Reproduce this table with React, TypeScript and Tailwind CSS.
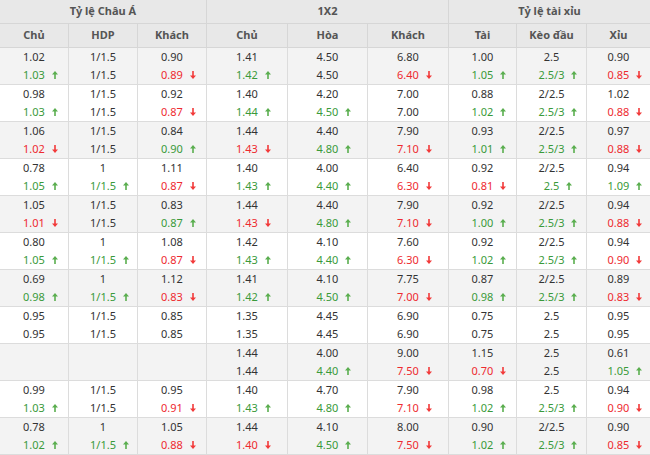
import React from "react";

const COLS = "grid grid-cols-[69px_69px_69px_81px_80px_81px_68px_70px_63px]";

const rows: string[][][] = [
  [["1.02", "1.03u"], ["1/1.5", "1/1.5"], ["0.90", "0.89d"], ["1.41", "1.42u"], ["4.50", "4.50"], ["6.80", "6.40d"], ["1.00", "1.05u"], ["2.5", "2.5/3u"], ["0.90", "0.85d"]],
  [["0.98", "1.03u"], ["1/1.5", "1/1.5"], ["0.92", "0.87d"], ["1.40", "1.44u"], ["4.20", "4.50u"], ["7.00", "7.00"], ["0.88", "1.02u"], ["2/2.5", "2.5/3u"], ["1.02", "0.88d"]],
  [["1.06", "1.02d"], ["1/1.5", "1/1.5"], ["0.84", "0.90u"], ["1.44", "1.43d"], ["4.40", "4.80u"], ["7.90", "7.10d"], ["0.93", "1.01u"], ["2/2.5", "2.5/3u"], ["0.97", "0.88d"]],
  [["0.78", "1.05u"], ["1", "1/1.5u"], ["1.11", "0.87d"], ["1.40", "1.43u"], ["4.00", "4.40u"], ["6.40", "6.30d"], ["0.92", "0.81d"], ["2/2.5", "2.5u"], ["0.94", "1.09u"]],
  [["1.05", "1.01d"], ["1/1.5", "1/1.5"], ["0.83", "0.87u"], ["1.44", "1.43d"], ["4.40", "4.80u"], ["7.90", "7.10d"], ["0.92", "1.00u"], ["2/2.5", "2.5/3u"], ["0.94", "0.88d"]],
  [["0.80", "1.05u"], ["1", "1/1.5u"], ["1.08", "0.87d"], ["1.42", "1.43u"], ["4.10", "4.40u"], ["7.60", "6.30d"], ["0.92", "1.02u"], ["2/2.5", "2.5/3u"], ["0.94", "0.90d"]],
  [["0.69", "0.98u"], ["1", "1/1.5u"], ["1.12", "0.83d"], ["1.41", "1.42u"], ["4.10", "4.50u"], ["7.75", "7.00d"], ["0.87", "0.98u"], ["2/2.5", "2.5/3u"], ["0.89", "0.83d"]],
  [["0.95", "0.95"], ["1/1.5", "1/1.5"], ["0.85", "0.85"], ["1.35", "1.35"], ["4.45", "4.45"], ["6.90", "6.90"], ["0.75", "0.75"], ["2.5", "2.5"], ["0.95", "0.95"]],
  [["", ""], ["", ""], ["", ""], ["1.44", "1.44"], ["4.00", "4.40u"], ["9.00", "7.50d"], ["1.15", "0.70d"], ["2.5", "2.5"], ["0.61", "1.05u"]],
  [["0.99", "1.03u"], ["1/1.5", "1/1.5"], ["0.95", "0.91d"], ["1.40", "1.43u"], ["4.70", "4.80u"], ["7.90", "7.10d"], ["0.98", "1.02u"], ["2.5", "2.5/3u"], ["0.94", "0.90d"]],
  [["0.78", "1.02u"], ["1", "1/1.5u"], ["1.05", "0.88d"], ["1.44", "1.40d"], ["4.10", "4.50u"], ["8.00", "7.50d"], ["0.90", "1.02u"], ["2/2.5", "2.5/3u"], ["0.90", "0.85d"]],
];

function Arrow({ up }: { up: boolean }) {
  return (
    <svg
      width="6"
      height="8"
      viewBox="0 0 6 8"
      className="absolute left-[calc(100%+7px)] top-[5px]"
    >
      {up ? (
        <polygon points="3,0 6,3.5 3.8,3.5 3.8,8 2.2,8 2.2,3.5 0,3.5" fill="#5aae4f" />
      ) : (
        <polygon points="3,8 6,4.5 3.8,4.5 3.8,0 2.2,0 2.2,4.5 0,4.5" fill="#f23a3a" />
      )}
    </svg>
  );
}

function Val({ v }: { v: string }) {
  const last = v.slice(-1);
  if (last === "u" || last === "d") {
    const up = last === "u";
    return (
      <span className={`relative ${up ? "text-[#3a9a3a]" : "text-[#ee2a2f]"}`}>
        {v.slice(0, -1)}
        <Arrow up={up} />
      </span>
    );
  }
  return <span>{v || "\u00a0"}</span>;
}

export default function App() {
  return (
    <div
      className="w-[650px] h-[455px] overflow-hidden bg-white text-[11px] text-[#333]"
      style={{ fontFamily: "'Noto Sans', 'DejaVu Sans', sans-serif" }}
    >
      <div className="grid grid-cols-[207px_242px_201px] bg-[#e8e8e8] text-[#555] font-bold border-b border-[#d6d6d6]">
        <div className="h-[23px] flex items-center justify-center border-r border-[#d6d6d6]">Tỷ lệ Châu Á</div>
        <div className="h-[23px] flex items-center justify-center border-r border-[#d6d6d6]">1X2</div>
        <div className="h-[23px] flex items-center justify-center">Tỷ lệ tài xỉu</div>
      </div>
      <div className={`${COLS} bg-[#e8e8e8] text-[#555] font-bold border-b border-[#d6d6d6]`}>
        {["Chủ", "HDP", "Khách", "Chủ", "Hòa", "Khách", "Tài", "Kèo đầu", "Xỉu"].map((h, i) => (
          <div
            key={i}
            className={`h-[23px] flex items-center justify-center ${i < 8 ? "border-r border-[#d6d6d6]" : ""}`}
          >
            {h}
          </div>
        ))}
      </div>
      {rows.map((row, r) => (
        <div
          key={r}
          className={`${COLS} border-b border-[#dcdcdc] ${r % 2 === 0 ? "bg-[#f3f3f3]" : "bg-white"}`}
        >
          {row.map((c, i) => (
            <div
              key={i}
              className={`h-[36px] flex flex-col items-center justify-center leading-[18px] ${i < 8 ? "border-r border-[#dcdcdc]" : ""}`}
            >
              <span>{c[0] || "\u00a0"}</span>
              <Val v={c[1]} />
            </div>
          ))}
        </div>
      ))}
    </div>
  );
}
